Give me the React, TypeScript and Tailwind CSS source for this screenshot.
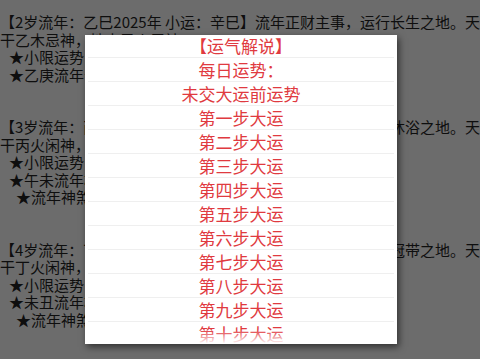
const bgBlocks: { text: string; indent: string }[][] = [
  [
    { text: "【2岁流年：乙巳2025年 小运：辛巳】流年正财主事，运行长生之地。天", indent: "pl-0" },
    { text: "干乙木忌神，地支巳火用神。", indent: "pl-0" },
    { text: "★小限运势：财运平稳。", indent: "pl-[9px]" },
    { text: "★乙庚流年合化金。", indent: "pl-[9px]" },
  ],
  [
    { text: "【3岁流年：丙午2026年 小运：壬午】流年偏财主事，运行沐浴之地。天", indent: "pl-0" },
    { text: "干丙火闲神，地支午火用神。", indent: "pl-0" },
    { text: "★小限运势：平顺。", indent: "pl-[9px]" },
    { text: "★午未流年相合。", indent: "pl-[9px]" },
    { text: "★流年神煞：天乙贵人。", indent: "pl-[16px]" },
  ],
  [
    { text: "【4岁流年：丁未2027年 小运：癸未】流年食神主事，运行冠带之地。天", indent: "pl-0" },
    { text: "干丁火闲神，地支未土忌神。", indent: "pl-0" },
    { text: "★小限运势：平稳。", indent: "pl-[9px]" },
    { text: "★未丑流年相冲。", indent: "pl-[9px]" },
    { text: "★流年神煞：华盖。", indent: "pl-[16px]" },
  ],
];

const menu = [
  "【运气解说】",
  "每日运势：",
  "未交大运前运势",
  "第一步大运",
  "第二步大运",
  "第三步大运",
  "第四步大运",
  "第五步大运",
  "第六步大运",
  "第七步大运",
  "第八步大运",
  "第九步大运",
  "第十步大运",
];

export default function App() {
  return (
    <div
      className="relative w-[480px] h-[359px] overflow-hidden bg-[#6c6c6c]"
      style={{ fontFamily: '"Noto Sans CJK SC", "Noto Sans", sans-serif' }}
    >
      {/* dimmed page text */}
      <div className="pt-[13px] text-[15px] leading-[17.5px] text-[#0e0e0e]">
        {bgBlocks.map((block, i) => (
          <div key={i} className="mb-[35px]">
            {block.map((line, j) => (
              <div key={j} className={`whitespace-nowrap ${line.indent}`}>
                {line.text}
              </div>
            ))}
          </div>
        ))}
      </div>

      {/* popup list */}
      <div className="absolute left-[85px] top-[35px] w-[312px] h-[309px] bg-white overflow-hidden shadow-[2px_3px_7px_rgba(0,0,0,0.55)]">
        {menu.map((item, i) => (
          <div
            key={item}
            className={`mx-[3px] flex items-center justify-center border-b border-[#efefef] text-[17px] text-[#e03a40] ${
              i === 0 ? "h-[23px]" : "h-[24px]"
            }`}
          >
            {item}
          </div>
        ))}
        <div className="absolute bottom-0 inset-x-0 h-[14px] bg-linear-to-t from-white to-transparent" />
      </div>
    </div>
  );
}
